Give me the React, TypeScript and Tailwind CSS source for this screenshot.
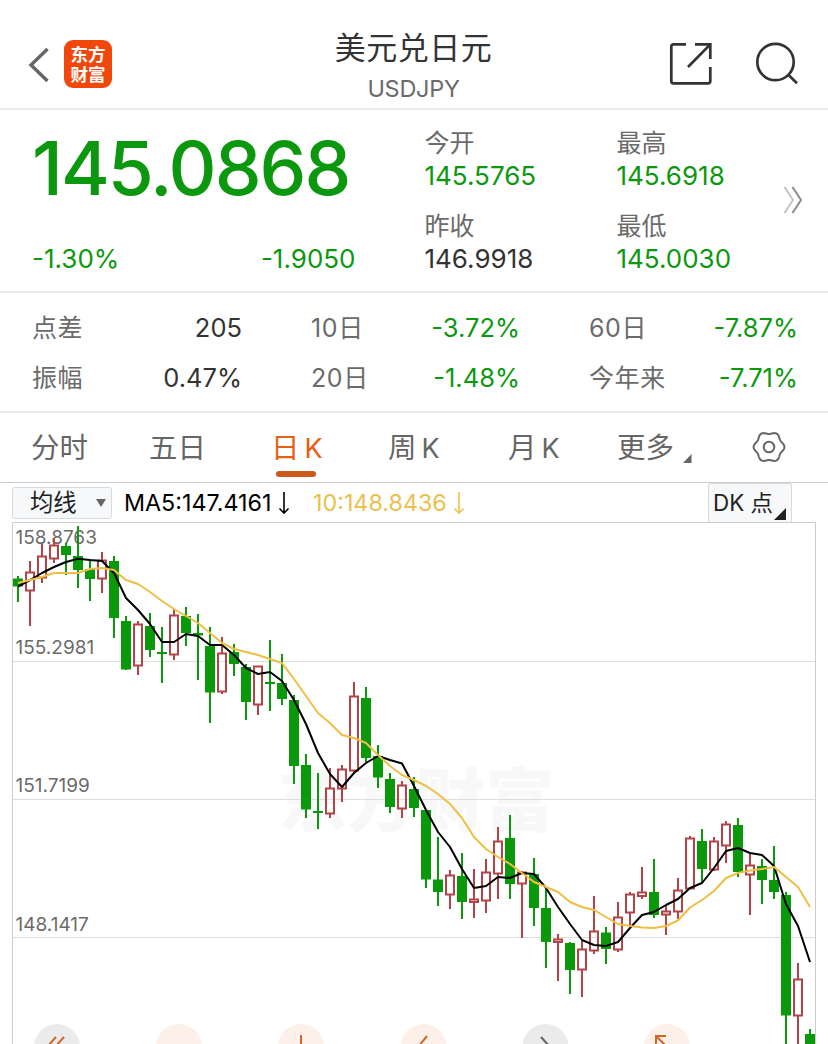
import { type ReactNode } from "react";

type Candle = [high: number, top: number, bottom: number, low: number, up: 0 | 1];

const CANDLES: Candle[] = [
  [576, 578.5, 586.5, 602, 0],
  [561, 572, 591, 626, 1],
  [544, 556, 578, 583, 1],
  [538, 545, 559, 563, 1],
  [543, 546, 555, 575, 0],
  [526, 556, 570, 588, 0],
  [561, 569, 579, 601, 0],
  [552, 560, 579, 593, 1],
  [556, 561, 618, 638, 0],
  [616, 621, 669.5, 670, 0],
  [621, 624, 666, 675, 1],
  [613, 626, 650, 657, 0],
  [627, 652, 654, 683, 0],
  [609, 615, 655, 660, 1],
  [607, 616, 633, 646, 0],
  [614, 633, 635.5, 680, 0],
  [627, 646, 692.5, 723, 0],
  [637, 653, 692, 694, 1],
  [644, 652, 664, 676, 0],
  [664, 667, 702, 720, 0],
  [666, 666, 705, 715, 1],
  [640, 682, 684, 711, 0],
  [654, 683, 699, 705, 0],
  [695, 700, 766, 784, 0],
  [754, 765, 809.5, 818, 0],
  [773, 811, 813, 829, 0],
  [768, 788, 814, 818, 1],
  [765, 769, 789, 802, 1],
  [682, 696, 771, 773, 1],
  [687, 698, 758, 762, 0],
  [745, 756, 777.5, 788, 0],
  [773, 779, 807, 813, 0],
  [781, 785, 809, 818, 1],
  [777, 789, 808, 817, 0],
  [810, 810, 879.5, 888, 0],
  [837, 879.5, 892, 906, 0],
  [870, 875, 895, 909, 1],
  [853, 876, 902, 919, 0],
  [869, 899, 902.5, 918, 1],
  [859, 872, 901, 913, 1],
  [827, 841, 874, 899, 1],
  [815, 838, 884, 899, 0],
  [871, 872, 884, 938, 1],
  [858, 874, 908, 926, 0],
  [889, 908, 942, 968, 0],
  [934, 939, 942.5, 981, 1],
  [942, 943, 970, 994, 0],
  [940, 949, 970, 997, 1],
  [896, 931, 951, 954, 1],
  [927, 932.5, 949, 964, 0],
  [902, 917, 950, 952, 1],
  [892, 894, 913, 926, 1],
  [867, 892, 896.5, 899, 1],
  [859, 892, 915, 918, 0],
  [905, 911, 915, 935, 1],
  [878, 890, 912, 919, 1],
  [836, 838, 889, 889, 1],
  [829, 841, 869, 883, 0],
  [837, 841, 870, 871, 1],
  [821, 824, 846, 863, 1],
  [818, 825, 872, 877, 0],
  [854, 865, 875, 915, 1],
  [859, 866, 880, 904, 0],
  [846, 880, 892, 899, 0],
  [892, 895, 1015.5, 1046, 0],
  [963, 979, 1016, 1046, 1],
  [1029, 1034, 1046, 1046, 0],
];

const MA5 = [
  586.5, 580, 573, 567, 562, 558.7, 560, 561, 573, 598, 610, 624, 642, 642, 634, 636, 645, 645, 655, 668, 674, 672,
  681, 700, 724, 753, 774, 787, 773, 763, 756, 760, 763.5, 786, 810, 832, 847, 869, 888, 886, 877, 878, 873, 874, 888,
  907, 924, 940, 945, 946, 942, 928, 915, 912, 905, 899, 888, 883, 868, 851, 848, 853, 855, 866, 904, 926, 962,
];

const MA10 = [
  583, 580, 577, 573, 573, 573, 569, 568, 570, 580, 584, 592, 601, 609, 616, 623, 633, 643, 649, 652, 655, 659, 663,
  679, 696, 713, 723, 735, 738, 743, 755, 766, 775, 780, 786, 794, 804, 818, 837, 849, 857, 864, 873, 882, 887, 892,
  902, 907, 910, 917, 924, 926, 927.5, 928, 926, 920.5, 907.5, 900, 891, 878, 873, 870.5, 869, 867, 877, 887, 907,
];

const STATS = [
  { label: "点差", value: "205", down: false },
  { label: "10日", value: "-3.72%", down: true },
  { label: "60日", value: "-7.87%", down: true },
  { label: "振幅", value: "0.47%", down: false },
  { label: "20日", value: "-1.48%", down: true },
  { label: "今年来", value: "-7.71%", down: true },
];

const QUOTES = [
  { label: "今开", value: "145.5765", down: true },
  { label: "最高", value: "145.6918", down: true },
  { label: "昨收", value: "146.9918", down: false },
  { label: "最低", value: "145.0030", down: true },
];

const xAt = (i: number) => 18 + i * 12;
const toPoints = (ys: number[]) => ys.map((y, i) => `${xAt(i)},${y}`).join(" ");

// six-lobed gear outline
const GEAR = Array.from({ length: 120 }, (_, i) => {
  const a = (i / 120) * Math.PI * 2;
  const r = 14.2 + 1.2 * Math.cos(6 * a);
  return `${(r * Math.cos(a)).toFixed(2)},${(r * Math.sin(a)).toFixed(2)}`;
}).join(" ");

function Header() {
  return (
    <header className="flex h-[110px] items-start border-b-2 border-[#ebebeb] text-[#333]">
      <div className="flex w-[275px] items-center pt-[39.5px] pl-[28px]">
        <svg className="mt-[3px] h-[36px] w-[22px]" viewBox="0 0 22 36" fill="none" stroke="#666" strokeWidth="3.4">
          <path d="M19.500 2 3 18l16.500 16" />
        </svg>
        <div className="ml-[14px] flex h-[48px] w-[48px] items-center justify-center rounded-[9px] bg-[#f1470b] font-['Noto_Sans_CJK_SC',sans-serif] text-[17.5px] leading-[19.5px] font-bold text-white">
          <p>
            东方
            <br />
            财富
          </p>
        </div>
      </div>
      <div className="flex w-[276px] flex-col items-center pt-[27px]">
        <h1 className="pl-[1px] text-[31px] leading-[42px] tracking-[0.5px]">美元兑日元</h1>
        <p className="mt-[2px] pl-[1px] text-[23.5px] leading-[36px] tracking-[-0.3px] text-[#6b6b6b]">USDJPY</p>
      </div>
      <div className="flex flex-1 items-center justify-between pt-[41px] pr-[28px] pl-[117px]">
        <svg className="h-[46px] w-[46px]" viewBox="0 0 46 46" fill="none" stroke="#333" strokeWidth="2.7">
          <path d="M18 3.400H5.500Q3.300 3.400 3.300 5.500V40Q3.300 42.300 5.500 42.300H40Q42.300 42.300 42.300 40V26" />
          <path d="M27 3.400H42.300V18M42.300 3.400 20 26" />
        </svg>
        <svg className="h-[46px] w-[46px]" viewBox="0 0 46 46" fill="none" stroke="#333" strokeWidth="2.7">
          <circle cx="21.5" cy="21" r="18.2" />
          <path d="m34 33.500 9 8.700" />
        </svg>
      </div>
    </header>
  );
}

function Summary() {
  return (
    <section className="flex h-[183px] border-b-2 border-[#ebebeb]">
      <div className="w-[424.5px] pl-[32px] text-[#0b980f]">
        <div className="mt-[16px] h-[84px] text-[74.5px] leading-[84px] font-medium tracking-[-2px]">145.0868</div>
        <div className="mt-[32.5px] flex w-[323.5px] justify-between text-[26px] leading-[32px]">
          <span>-1.30%</span>
          <span>-1.9050</span>
        </div>
      </div>
      <div className="grid w-[348.5px] grid-cols-[192px_1fr] content-start gap-y-[17px] pt-[16px]">
        {QUOTES.map((q) => (
          <div key={q.label}>
            <div className="text-[25px] leading-[34px] text-[#6b6b6b]">{q.label}</div>
            <div className={`text-[26px] leading-[32px] ${q.down ? "text-[#0b980f]" : "text-[#333]"}`}>{q.value}</div>
          </div>
        ))}
      </div>
      <svg className="mt-[76px] ml-[9px] h-[28px] w-[22px]" viewBox="0 0 22 28" fill="none" strokeWidth="2">
        <path d="m2.500 1 8.500 13-8.500 13" stroke="#c4c4c4" />
        <path d="M10.500 1 19 14l-8.500 13" stroke="#8c8c8c" />
      </svg>
    </section>
  );
}

function Stats() {
  return (
    <section className="grid h-[120px] grid-cols-[210px_209px_209px] content-start gap-x-[69px] border-b-2 border-[#ebebeb] pt-[10px] pl-[32px] text-[25.5px] leading-[50px]">
      {STATS.map((s) => (
        <div key={s.label} className="flex justify-between">
          <span className="text-[25px] tracking-[0.6px] text-[#6b6b6b]">{s.label}</span>
          <span className={s.down ? "text-[#0b980f]" : "text-[#333]"}>{s.value}</span>
        </div>
      ))}
    </section>
  );
}

function Tab({ children, className }: { children: ReactNode; className: string }) {
  return <div className={`h-[70px] shrink-0 whitespace-nowrap ${className}`}>{children}</div>;
}

function Tabs() {
  return (
    <nav className="flex h-[70px] border-b border-[#ccc] pl-[31px] text-[28.5px] leading-[70px] text-[#666]">
      <Tab className="w-[118px]">分时</Tab>
      <Tab className="w-[122px]">五日</Tab>
      <Tab className="relative w-[117px] text-[#e65f14] [word-spacing:-3px]">
        日 <span className="text-[27px]">K</span>
        <span className="absolute bottom-[6px] left-[5px] h-[6px] w-[40px] rounded-full bg-[#cb5a1b]" />
      </Tab>
      <Tab className="w-[120px] [word-spacing:-3px]">
        周 <span className="text-[27px]">K</span>
      </Tab>
      <Tab className="w-[109px] [word-spacing:-3px]">
        月 <span className="text-[27px]">K</span>
      </Tab>
      <Tab className="flex w-[134px] items-center">
        更多
        <svg className="mt-[20px] ml-[9px] h-[9px] w-[9px]" viewBox="0 0 9 9" fill="#666">
          <path d="M8.500 0v9H0z" />
        </svg>
      </Tab>
      <svg className="mt-[17px] ml-[0.5px] h-[34px] w-[34px]" viewBox="-17 -17 34 34" fill="none" stroke="#666" strokeWidth="2">
        <polygon points={GEAR} strokeLinejoin="round" />
        <circle r="5.3" />
      </svg>
    </nav>
  );
}

function Indicators() {
  return (
    <div className="flex h-[39px] items-center pl-[12px] text-[23.3px] leading-[38px] whitespace-nowrap text-black">
      <div className="flex h-[32px] w-[100px] items-center justify-between rounded-[3px] border border-[#d8dadc] bg-[#f6f8f9] pr-[5px] pl-[17px] text-[#222]">
        均线
        <svg className="h-[8px] w-[10px]" viewBox="0 0 10 8" fill="#666">
          <path d="M0 0h10L5 8z" />
        </svg>
      </div>
      <div className="ml-[12px] flex w-[189px] items-center">
        MA5:147.4161
        <DownArrow />
      </div>
      <div className="flex w-[395px] items-center text-[#eac150]">
        10:148.8436
        <DownArrow />
      </div>
      <div className="flex h-[39px] w-[84px] items-center rounded-t-[3px] border border-b-0 border-[#d8dadc] bg-[#f6f8f9] pl-[4px] text-[22.4px] text-[#222]">
        DK 点
        <svg className="mt-[21px] ml-[1px] h-[12px] w-[12px] shrink-0" viewBox="0 0 12 12" fill="#222">
          <path d="M12 0v12H0z" />
        </svg>
      </div>
    </div>
  );
}

function DownArrow() {
  return (
    <svg className="ml-[6px] h-[24px] w-[12px]" viewBox="0 0 12 24" fill="none" stroke="currentColor" strokeWidth="1.6">
      <path d="M6 1v21M1.500 17.500 6 22.200l4.500-4.700" />
    </svg>
  );
}

function Chart() {
  return (
    <svg
      className="block h-[522px] w-[828px] font-['Inter','Noto_Sans_CJK_SC',sans-serif]"
      viewBox="0 522 828 522"
      fill="none"
    >
      <text x="278" y="826" fontSize="69" fontWeight="900" fill="#f8f8f8">
        东方财富
      </text>
      <path d="M12.500 1044V522.500H815.500V1044" stroke="#ccc" />
      <path d="M13 661.500H815M13 799.500H815M13 937.500H815" stroke="#dedede" />

      <g fill="#6b6b6b" fontSize="19">
        <text x="15.5" y="544">158.8763</text>
        <text x="15.5" y="654">155.2981</text>
        <text x="15.5" y="792">151.7199</text>
        <text x="15.5" y="931">148.1417</text>
      </g>

      {CANDLES.map(([high, top, bottom, low, up], i) => {
        const x = xAt(i);
        return up ? (
          <g key={i} stroke="#b04448" strokeWidth="2">
            <path d={`M${x} ${high}V${top}M${x} ${bottom}V${low}`} />
            <rect x={x - 4} y={top + 0.5} width="8" height={Math.max(bottom - top - 1, 1)} />
          </g>
        ) : (
          <g key={i} fill="#09990b">
            <rect x={x - 1} y={high} width="2" height={low - high} />
            <rect x={x - 5} y={top} width="10" height={bottom - top} />
          </g>
        );
      })}

      <polyline points={toPoints(MA5)} stroke="#000" strokeWidth="2" strokeLinejoin="round" />
      <polyline points={toPoints(MA10)} stroke="#efbf45" strokeWidth="2" strokeLinejoin="round" />

      {/* floating chart controls */}
      <g fill="#ebebeb">
        <circle cx="57" cy="1047" r="23" />
        <circle cx="545.5" cy="1047" r="23" />
      </g>
      <g fill="#fdf0e8">
        <circle cx="179" cy="1047" r="23" />
        <circle cx="301" cy="1047" r="23" />
        <circle cx="423.5" cy="1047" r="23" />
        <circle cx="667" cy="1047" r="23" />
      </g>
      <g stroke="#d0662a" strokeWidth="2">
        <path d="m56 1037-9 10M64 1037l-9 10M301 1035v12M427 1036l-9 11" />
        <path d="M656 1047v-11h10M656 1036l11 11" />
      </g>
      <path d="m541 1037 9 10" stroke="#666" strokeWidth="2" />
    </svg>
  );
}

export default function App() {
  return (
    <main className="h-[1044px] w-[828px] overflow-hidden bg-white font-['Inter','Noto_Sans_CJK_SC',sans-serif]">
      <Header />
      <Summary />
      <Stats />
      <Tabs />
      <Indicators />
      <Chart />
    </main>
  );
}
